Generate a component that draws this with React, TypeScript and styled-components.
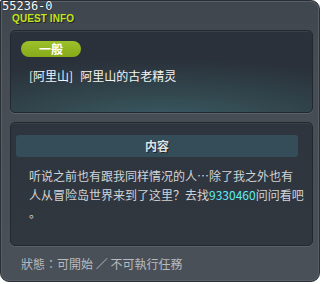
import styled, { createGlobalStyle } from "styled-components";

const GlobalStyle = createGlobalStyle`
  body {
    margin: 0;
    background: #ffffff;
  }
`;

const cjk = `"Noto Sans CJK SC", "Noto Sans CJK TC", sans-serif`;

const Window = styled.div`
  position: relative;
  width: 320px;
  height: 282px;
  box-sizing: border-box;
  border: 1px solid #2a2f36;
  border-radius: 2px 9px 9px 9px;
  background: linear-gradient(#3f464e 0%, #454c54 25%, #4a5058 100%);
  box-shadow: inset 0 0 0 1px #585f67;
  padding: 0 6px 0 9px;
  display: flex;
  flex-direction: column;
`;

const IdTag = styled.div`
  position: absolute;
  top: -1px;
  left: 1px;
  font-family: "DejaVu Sans Mono", monospace;
  font-size: 12px;
  line-height: 13px;
  color: #ffffff;
  text-shadow: 0 0 1px #000;
`;

const Header = styled.div`
  height: 29px;
  box-sizing: border-box;
  padding: 12px 0 0 2px;
`;

const Title = styled.div`
  font-family: "Liberation Sans", Arial, sans-serif;
  font-weight: bold;
  font-size: 10px;
  line-height: 11px;
  letter-spacing: 0.1px;
  color: #c6e21e;
  text-shadow: 1px 1px 0 #1e2226;
`;

const Panel = styled.div<{ $h: number }>`
  height: ${(p) => p.$h}px;
  box-sizing: border-box;
  border: 1px solid #23282f;
  border-radius: 5px;
  box-shadow: 0 1px 0 #5a6169, inset 0 1px 0 #3a414a;
`;

const QuestPanel = styled(Panel)`
  padding: 10px 10px 0 10px;
  background: radial-gradient(
    ellipse 90% 80% at 50% 115%,
    #3b5c69 0%,
    #33494f 45%,
    #2a313b 100%
  );
`;

const ContentPanel = styled(Panel)`
  margin-top: 9px;
  padding-top: 12px;
  background: linear-gradient(#2f353e, #31373f);
`;

const Badge = styled.div`
  width: 60px;
  height: 16px;
  border-radius: 8px;
  background: linear-gradient(#9cc22b, #86aa19);
  color: #ffffff;
  font-family: ${cjk};
  font-weight: bold;
  font-size: 12px;
  line-height: 16px;
  text-align: center;
`;

const QuestName = styled.div`
  margin: 10px 0 0 8px;
  font-family: ${cjk};
  font-size: 12px;
  line-height: 18px;
  color: #f2f4f5;
`;

const Area = styled.span`
  margin-right: 7px;
`;

const SectionBar = styled.div`
  height: 22px;
  margin: 0 14px 0 5px;
  border-radius: 3px;
  background: #344d59;
  font-family: ${cjk};
  font-weight: bold;
  font-size: 12px;
  line-height: 22px;
  text-align: center;
  color: #dfe3e6;
  text-shadow: 1px 1px 0 #1c242a;
`;

const Body = styled.div`
  margin: 10px 0 0 18px;
  font-family: ${cjk};
  font-size: 12px;
  line-height: 18.5px;
  color: #d0d4d8;
  white-space: nowrap;
`;

const Npc = styled.span`
  color: #5eeef4;
`;

const Status = styled.div`
  flex: 1;
  display: flex;
  align-items: center;
  padding: 0 0 1px 11px;
  font-family: "Noto Sans CJK TC", "Noto Sans CJK SC", sans-serif;
  font-size: 12px;
  color: #b6bbc0;
  white-space: pre;
`;

export default function App() {
  return (
    <>
      <GlobalStyle />
      <Window>
        <IdTag>55236-0</IdTag>
        <Header>
          <Title>QUEST INFO</Title>
        </Header>
        <QuestPanel $h={83}>
          <Badge>一般</Badge>
          <QuestName>
            <Area>[阿里山]</Area>阿里山的古老精灵
          </QuestName>
        </QuestPanel>
        <ContentPanel $h={124}>
          <SectionBar>内容</SectionBar>
          <Body>
            听说之前也有跟我同样情况的人…除了我之外也有
            <br />
            人从冒险岛世界来到了这里？去找<Npc>9330460</Npc>问问看吧
            <br />。
          </Body>
        </ContentPanel>
        <Status>{"狀態：可開始 ／ 不可執行任務"}</Status>
      </Window>
    </>
  );
}
